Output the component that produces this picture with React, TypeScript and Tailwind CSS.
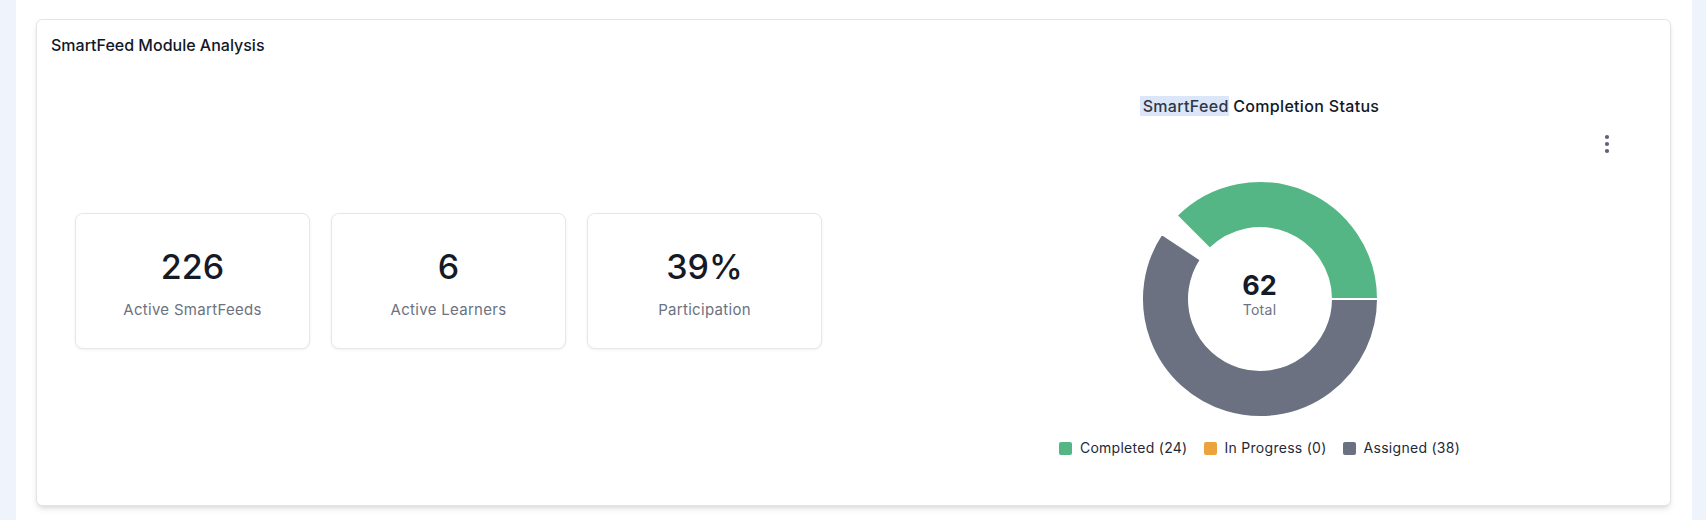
import { EllipsisVertical } from "lucide-react";

type Stat = {
  value: string;
  label: string;
};

const stats: Stat[] = [
  { value: "226", label: "Active SmartFeeds" },
  { value: "6", label: "Active Learners" },
  { value: "39%", label: "Participation" },
];

const legend = [
  { label: "Completed (24)", color: "bg-[#53b684]" },
  { label: "In Progress (0)", color: "bg-[#eda33d]" },
  { label: "Assigned (38)", color: "bg-[#6b7180]" },
];

// annular sector, angles in degrees, counter-clockwise from 3 o'clock
function sector(cx: number, cy: number, r0: number, r1: number, a0: number, a1: number) {
  const rad = (a: number) => (a * Math.PI) / 180;
  const pt = (r: number, a: number) =>
    `${(cx + r * Math.cos(rad(a))).toFixed(2)} ${(cy - r * Math.sin(rad(a))).toFixed(2)}`;
  const large = a1 - a0 > 180 ? 1 : 0;
  return [
    `M ${pt(r1, a0)}`,
    `A ${r1} ${r1} 0 ${large} 0 ${pt(r1, a1)}`,
    `L ${pt(r0, a1)}`,
    `A ${r0} ${r0} 0 ${large} 1 ${pt(r0, a0)}`,
    "Z",
  ].join(" ");
}

function StatCard({ stat }: { stat: Stat }) {
  return (
    <div className="flex h-[136px] w-[235px] flex-col items-center rounded-lg border border-[#e5e7eb] bg-white pt-[33px] shadow-[0_1px_3px_rgba(0,0,0,0.06)]">
      <p className="text-[34px] leading-[40px] font-medium text-[#151a26]">{stat.value}</p>
      <p className="mt-[13px] text-[15px] leading-[20px] tracking-[0.02em] text-[#6b7280]">
        {stat.label}
      </p>
    </div>
  );
}

function Donut() {
  return (
    <div className="relative mt-[62px] h-[240px] w-[240px]">
      <svg width="240" height="240" viewBox="0 0 240 240">
        <path d={sector(120, 120, 71, 118, 0, 135)} fill="#53b684" stroke="#ffffff" strokeWidth="2" />
        <path d={sector(120, 120, 71, 118, 146.5, 360)} fill="#6b7180" stroke="#ffffff" strokeWidth="2" />
      </svg>
      <div className="absolute inset-0 flex flex-col items-center justify-center pb-[9px]">
        <p className="text-[27px] leading-[30px] font-bold text-[#151a26]">62</p>
        <p className="text-[14px] leading-[18px] tracking-[0.02em] text-[#6b7280]">Total</p>
      </div>
    </div>
  );
}

export default function App() {
  return (
    <main
      className="min-h-[520px] bg-[#eef3fc] pl-[16px] pr-[14px]"
      style={{ fontFamily: "Inter, 'Noto Sans', sans-serif" }}
    >
      <div className="h-[520px] bg-white pl-[20px] pr-[21px] pt-[19px]">
        <section className="h-[487px] rounded-md border border-[#e2e4e8] bg-white shadow-md">
          <div className="h-[68px] pl-[14px] pt-[14px]">
            <h2 className="text-[16px] leading-[22px] font-medium text-[#111827]">
              SmartFeed Module Analysis
            </h2>
          </div>

          <div className="flex h-[386px]">
            <div className="flex w-[812px] items-center gap-[21px] pl-[38px]">
              {stats.map((stat) => (
                <StatCard key={stat.label} stat={stat} />
              ))}
            </div>

            <div className="relative flex flex-1 flex-col items-center">
              <h3 className="mt-[7px] text-[16px] leading-[22px] tracking-[0.02em] font-medium text-[#111827]">
                <span className="bg-[#dbe6f8] pl-[3px] text-[#2d3748]">SmartFeed</span> Completion Status
              </h3>

              <button className="absolute left-[746px] top-[44px] text-[#5f6474]">
                <EllipsisVertical size={24} strokeWidth={2.2} />
              </button>

              <Donut />

              <div className="mt-[19px] flex items-center gap-4">
                {legend.map((item) => (
                  <div key={item.label} className="flex items-center gap-2">
                    <span className={`h-[13px] w-[13px] rounded-[2px] ${item.color}`} />
                    <span className="text-[14px] leading-[20px] tracking-[0.02em] text-[#1f2937]">
                      {item.label}
                    </span>
                  </div>
                ))}
              </div>
            </div>
          </div>
        </section>
      </div>
    </main>
  );
}
